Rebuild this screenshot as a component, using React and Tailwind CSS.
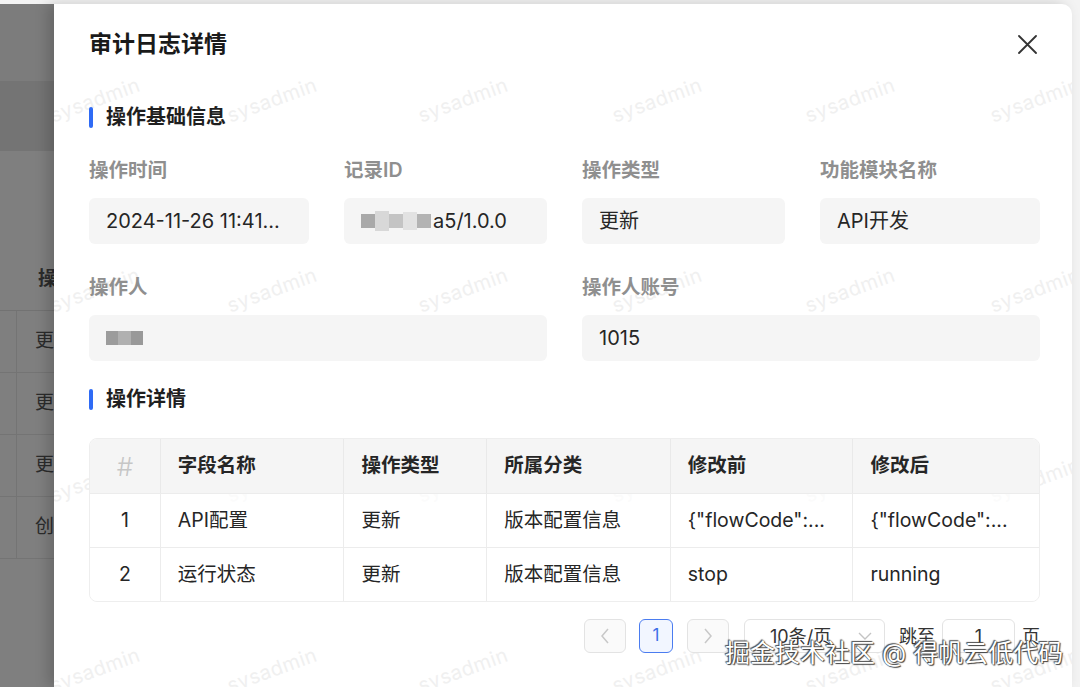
import React from "react";

const cols = [
  { key: "idx", title: "#", w: "w-[70px]" },
  { key: "field", title: "字段名称", w: "w-[184px]" },
  { key: "op", title: "操作类型", w: "w-[143px]" },
  { key: "cat", title: "所属分类", w: "w-[184px]" },
  { key: "before", title: "修改前", w: "w-[183px]" },
  { key: "after", title: "修改后", w: "w-[187px]" },
];

const rows = [
  { idx: "1", field: "API配置", op: "更新", cat: "版本配置信息", before: '{"flowCode":...', after: '{"flowCode":...' },
  { idx: "2", field: "运行状态", op: "更新", cat: "版本配置信息", before: "stop", after: "running" },
];

// faint "sysadmin" watermark grid
const marks = [];
[100, 290, 480, 670].forEach((y) => {
  [95, 272, 463, 657, 850, 1035].forEach((x) => marks.push({ x, y }));
});

function SectionTitle({ children }) {
  return (
    <div className="flex items-center h-[24px]">
      <span className="w-[4px] h-[21px] rounded-full bg-[#2f6bf5]" />
      <span className="ml-[13px] text-[20px] font-bold text-[#1f1f1f] leading-none">{children}</span>
    </div>
  );
}

function Field({ label, children, className = "" }) {
  return (
    <div className={className}>
      <div className="h-[28px] flex items-center text-[19.5px] font-semibold text-[#8f8f8f]">{label}</div>
      <div className="mt-[13px] h-[46px] rounded-[6px] bg-[#f5f5f5] px-[17px] flex items-center text-[20px] text-[#262626] whitespace-nowrap overflow-hidden">
        {children}
      </div>
    </div>
  );
}

function LeftMask() {
  return (
    <div className="w-[54px] shrink-0 overflow-hidden bg-[#7f7f7f] flex flex-col">
      <div className="h-[77px] bg-[#7c7c7c]" />
      <div className="h-[70px] bg-[#747474]" />
      <div className="h-[98px]" />
      <div className="h-[62px] flex items-center pl-[38px] text-[19px] font-semibold text-[#2b2b2b] border-b border-[#727272]">操</div>
      {["更", "更", "更", "创"].map((t, i) => (
        <div key={i} className="h-[62px] flex border-b border-[#747474]">
          <div className="w-[20px] border-r border-[#747474]" />
          <div className="flex items-center pl-[18px] text-[19px] text-[#2b2b2b]">{t}</div>
        </div>
      ))}
    </div>
  );
}

export default function App() {
  return (
    <div className="relative w-[1080px] h-[687px] overflow-hidden bg-[#f3f3f3] pt-[4px] flex [font-family:Inter,'Noto_Sans_CJK_SC',sans-serif]">
      <LeftMask />

      {/* modal */}
      <div className="relative flex-1 mr-[8px] bg-white rounded-tr-[10px] shadow-[-6px_0_14px_rgba(0,0,0,0.18)] pl-[35px] pr-[32px] overflow-hidden">
        <div className="absolute inset-0 pointer-events-none">
          {marks.map((m, i) => (
            <span
              key={i}
              className="absolute -translate-x-1/2 -translate-y-1/2 -rotate-[20deg] text-[20px] text-[#f0f0f0] tracking-wide"
              style={{ left: m.x - 54, top: m.y - 4 }}
            >
              sysadmin
            </span>
          ))}
        </div>

        <div className="relative">
          <div className="mt-[25px] h-[30px] flex items-center justify-between">
            <h1 className="text-[23px] font-bold text-[#1a1a1a]">审计日志详情</h1>
            <svg width="19" height="19" viewBox="0 0 19 19" className="mr-[3px]">
              <path d="M1 1L18 18M18 1L1 18" stroke="#333" strokeWidth="1.8" strokeLinecap="round" />
            </svg>
          </div>

          <div className="mt-[46px]">
            <SectionTitle>操作基础信息</SectionTitle>
          </div>

          <div className="mt-[28px] grid grid-cols-[220px_203px_203px_220px] gap-x-[35px] gap-y-[30px]">
            <Field label="操作时间">2024-11-26 11:41...</Field>
            <Field label="记录ID">
              <span className="flex items-center blur-[0.6px] mr-[2px]">
                <span className="w-[14px] h-[14px] bg-[#a9a9a9]" />
                <span className="w-[14px] h-[20px] bg-[#d8d8d8]" />
                <span className="w-[14px] h-[14px] bg-[#c4c4c4]" />
                <span className="w-[14px] h-[18px] bg-[#e2e2e2]" />
                <span className="w-[14px] h-[14px] bg-[#b3b3b3]" />
              </span>
              a5/1.0.0
            </Field>
            <Field label="操作类型">更新</Field>
            <Field label="功能模块名称">API开发</Field>
            <Field label="操作人" className="col-span-2">
              <span className="flex items-center blur-[0.5px]">
                <span className="w-[12px] h-[14px] bg-[#9c9c9c]" />
                <span className="w-[13px] h-[14px] bg-[#b0b0b0]" />
                <span className="w-[12px] h-[14px] bg-[#999999]" />
              </span>
            </Field>
            <Field label="操作人账号" className="col-span-2">1015</Field>
          </div>

          <div className="mt-[26px]">
            <SectionTitle>操作详情</SectionTitle>
          </div>

          {/* table */}
          <div className="mt-[27px] w-[951px] rounded-[8px] border border-[#eeeeee] overflow-hidden">
            <div className="flex h-[54px] bg-[#f5f5f5]">
              <div className="w-[70px] flex items-center justify-center text-[26px] font-light text-[#c6c6c6]">#</div>
              {cols.slice(1).map((c) => (
                <div
                  key={c.key}
                  className={`${c.w} flex items-center pl-[17px] border-l border-[#e9e9e9] text-[19.5px] font-semibold text-[#262626]`}
                >
                  {c.title}
                </div>
              ))}
            </div>
            {rows.map((r, ri) => (
              <div key={ri} className="flex h-[54px] border-t border-[#ececec] bg-white/70">
                {cols.map((c, i) => (
                  <div
                    key={c.key}
                    className={`${c.w} flex items-center text-[19.5px] text-[#262626] whitespace-nowrap ${i > 0 ? "border-l border-[#ececec] pl-[17px]" : "justify-center"}`}
                  >
                    {r[c.key]}
                  </div>
                ))}
              </div>
            ))}
          </div>

          {/* pagination */}
          <div className="mt-[17px] w-[951px] flex items-center justify-end text-[18px] text-[#333]">
            <div className="w-[42px] h-[34px] rounded-[6px] border border-[#e3e3e3] bg-[#fafafa] flex items-center justify-center">
              <svg width="10" height="16" viewBox="0 0 10 16">
                <path d="M8 1L2 8l6 7" fill="none" stroke="#c8c8c8" strokeWidth="1.5" />
              </svg>
            </div>
            <div className="ml-[13px] w-[34px] h-[34px] rounded-[6px] border border-[#4a7cf0] bg-[#f2f6ff] flex items-center justify-center text-[#3d6fe8] text-[17px]">1</div>
            <div className="ml-[14px] w-[42px] h-[34px] rounded-[6px] border border-[#e3e3e3] bg-[#fafafa] flex items-center justify-center">
              <svg width="10" height="16" viewBox="0 0 10 16">
                <path d="M2 1l6 7-6 7" fill="none" stroke="#c8c8c8" strokeWidth="1.5" />
              </svg>
            </div>
            <div className="ml-[15px] w-[141px] h-[34px] rounded-[6px] border border-[#e3e3e3] bg-white flex items-center pl-[25px] pr-[12px] justify-between">
              <span>10条/页</span>
              <svg width="14" height="9" viewBox="0 0 14 9">
                <path d="M1 1l6 6 6-6" fill="none" stroke="#c4c4c4" strokeWidth="1.4" />
              </svg>
            </div>
            <span className="ml-[14px]">跳至</span>
            <div className="ml-[7px] w-[73px] h-[34px] rounded-[6px] border border-[#e3e3e3] bg-white flex items-center justify-center">1</div>
            <span className="ml-[7px]">页</span>
          </div>
        </div>
      </div>

      {/* site watermark */}
      <div className="absolute left-[725px] top-[636px] text-[25px] leading-[34px] text-white whitespace-nowrap [text-shadow:0_0_1px_#222,1px_1px_1px_#444,-1px_-1px_1px_#555]">
        掘金技术社区 @ 得帆云低代码
      </div>
    </div>
  );
}
